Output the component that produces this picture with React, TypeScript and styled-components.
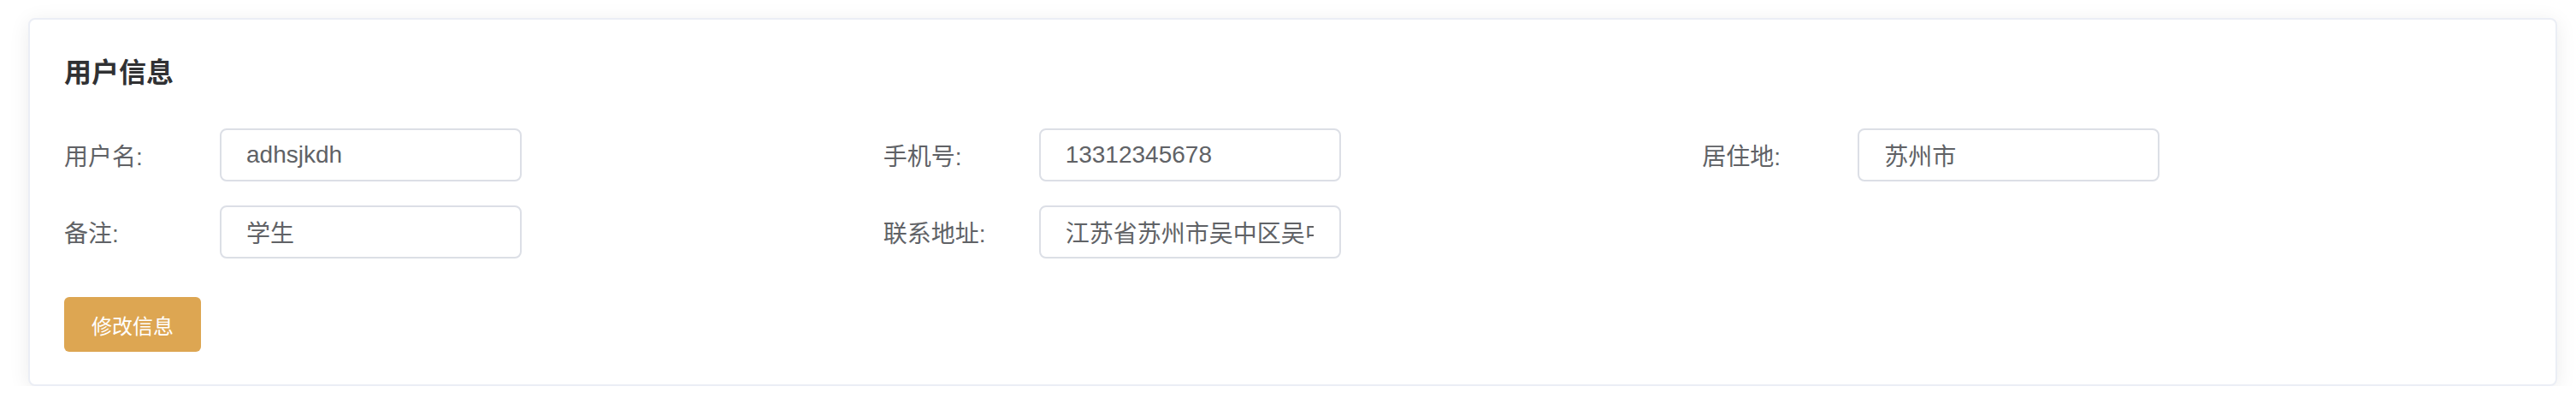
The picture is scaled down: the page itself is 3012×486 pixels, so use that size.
import styled, { createGlobalStyle } from "styled-components";

const GlobalStyle = createGlobalStyle`
    body {
        margin: 0;
        background: #ffffff;
        font-family: "Liberation Sans", "Noto Sans CJK SC", sans-serif;
    }
`;

const Page = styled.main`
    padding: 21px 22px 0 33px;
`;

const Card = styled.section`
    border: 2px solid #ebeef5;
    border-radius: 8px;
    background: #ffffff;
    box-shadow: 0 4px 24px rgba(0, 0, 0, 0.08);
    padding: 40px 40px 38px 40px;
`;

const Title = styled.h2`
    margin: 0 0 43px;
    font-size: 32px;
    line-height: 44px;
    font-weight: 700;
    color: #303133;
`;

const FieldGrid = styled.div`
    display: grid;
    grid-template-columns: repeat(3, 1fr);
    row-gap: 28px;
`;

const Field = styled.div`
    display: flex;
    align-items: center;
    height: 62px;
`;

const Label = styled.label`
    flex: 0 0 182px;
    font-size: 28px;
    color: #606266;
`;

const Input = styled.input`
    box-sizing: border-box;
    width: 353px;
    height: 62px;
    padding: 0 30px 0 29px;
    border: 2px solid #dcdfe6;
    border-radius: 8px;
    outline: none;
    font-family: "Liberation Sans", "Noto Sans CJK SC", sans-serif;
    font-size: 28px;
    color: #606266;
    background: #ffffff;
`;

const Actions = styled.div`
    margin-top: 45px;
`;

const Button = styled.button`
    width: 160px;
    height: 64px;
    border: none;
    border-radius: 6px;
    background: #dda652;
    color: #ffffff;
    font-family: "Liberation Sans", "Noto Sans CJK SC", sans-serif;
    font-size: 24px;
    cursor: pointer;
`;

const fields = [
    { label: "用户名:", value: "adhsjkdh" },
    { label: "手机号:", value: "13312345678" },
    { label: "居住地:", value: "苏州市" },
    { label: "备注:", value: "学生" },
    { label: "联系地址:", value: "江苏省苏州市吴中区吴中大道1188号" },
];

export default function App() {
    return <>
        <GlobalStyle />
        <Page>
            <Card>
                <Title>用户信息</Title>
                <FieldGrid>
                    {fields.map(f => (
                        <Field key={f.label}>
                            <Label>{f.label}</Label>
                            <Input value={f.value} readOnly />
                        </Field>
                    ))}
                </FieldGrid>
                <Actions>
                    <Button>修改信息</Button>
                </Actions>
            </Card>
        </Page>
    </>;
}
